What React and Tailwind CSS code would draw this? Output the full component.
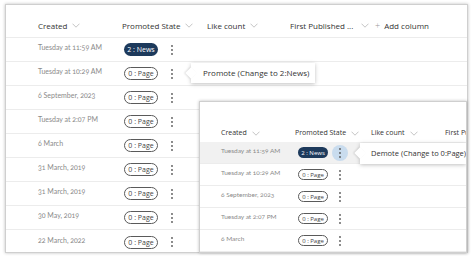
import React from "react";

const outerRows = [
  ["Tuesday at 11:59 AM", true],
  ["Tuesday at 10:29 AM", false],
  ["6 September, 2023", false],
  ["Tuesday at 2:07 PM", false],
  ["6 March", false],
  ["31 March, 2019", false],
  ["31 March, 2019", false],
  ["30 May, 2019", false],
  ["22 March, 2022", false],
];

const innerRows = [
  ["Tuesday at 11:59 AM", true],
  ["Tuesday at 10:29 AM", false],
  ["6 September, 2023", false],
  ["Tuesday at 2:07 PM", false],
  ["6 March", false],
];

function Chevron() {
  return (
    <svg width="8" height="5" viewBox="0 0 8 5">
      <path d="M0.5 0.7 L4 4.2 L7.5 0.7" fill="none" stroke="#b5b5b5" strokeWidth="0.8" />
    </svg>
  );
}

function Kebab() {
  return (
    <svg width="4" height="12" viewBox="0 0 4 12">
      <circle cx="2" cy="2" r="0.9" fill="#555" />
      <circle cx="2" cy="6" r="0.9" fill="#555" />
      <circle cx="2" cy="10" r="0.9" fill="#555" />
    </svg>
  );
}

function Pill({ news, small }) {
  const size = small ? "w-[30px] h-[11px] text-[6px]" : "w-[34px] h-[13px] text-[7px]";
  return news ? (
    <span className={`${size} rounded-full bg-[#1d3a5c] text-white flex items-center justify-center leading-none`}>
      2 : News
    </span>
  ) : (
    <span className={`${size} rounded-full border border-[#5a5a5a] text-[#444] bg-white flex items-center justify-center leading-none`}>
      0 : Page
    </span>
  );
}

function Head({ children, small }) {
  return (
    <div className={`flex items-center gap-[5px] text-[#333] whitespace-nowrap ${small ? "text-[7px]" : "text-[8px]"}`}>
      <span>{children}</span>
      <Chevron />
    </div>
  );
}

export default function App() {
  return (
    <div
      className="relative w-[474px] h-[260px] bg-white pt-[4px] pl-[5px] overflow-hidden"
      style={{ fontFamily: "'Open Sans', 'Noto Sans', sans-serif" }}
    >
      {/* Outer panel */}
      <div className="w-[463px] h-[249px] border border-[#cfcfcf] shadow-[0_0_3px_rgba(0,0,0,0.25)] bg-white">
        <div className="h-[33px] pt-[9px] pl-[32px] grid grid-cols-[84px_85px_83px_85px_auto] items-center border-b border-[#ececec]">
          <Head>Created</Head>
          <Head>Promoted State</Head>
          <Head>Like count</Head>
          <div className="flex items-center gap-[8px] text-[8px] text-[#333] whitespace-nowrap">
            <span>First Published ...</span>
            <Chevron />
          </div>
          <div className="flex items-center gap-[4px] text-[8px] text-[#333]">
            <span className="text-[#999] text-[9px] font-light">+</span>
            <span>Add column</span>
          </div>
        </div>
        {outerRows.map(([d, news], i) => (
          <div
            key={i}
            className="h-[24px] pl-[32px] grid grid-cols-[84px_auto] items-center border-b border-[#ececec] last:border-b-0"
          >
            <span
              className="text-[7px] text-[#8a8a8a] oldstyle-nums mb-[4px]"
              style={{ fontFamily: "Lato, 'Noto Sans', sans-serif" }}
            >
              {d}
            </span>
            <div className="flex items-center pl-[2px]">
              <Pill news={news} />
              <span className="ml-[12px]">
                <Kebab />
              </span>
            </div>
          </div>
        ))}
      </div>

      {/* Promote tooltip */}
      <div className="absolute left-[191px] top-[63px] w-[124px] h-[20px] bg-white shadow-[0_1px_4px_rgba(0,0,0,0.25)] flex items-center pl-[12px] text-[8px] text-[#333] whitespace-nowrap">
        <span className="absolute left-[-4px] top-[6px] w-[8px] h-[8px] bg-white rotate-45 shadow-[-1px_1px_2px_rgba(0,0,0,0.12)]" />
        <span className="relative">Promote (Change to 2:News)</span>
      </div>

      {/* Inner panel */}
      <div className="absolute left-[199px] top-[101px] w-[268px] h-[152px] bg-white border border-[#cfcfcf] shadow-[0_0_3px_rgba(0,0,0,0.25)] overflow-hidden">
        <div className="h-[40px] pt-[22px] pl-[21px] grid grid-cols-[74px_76px_74px_auto] items-center">
          <Head small>Created</Head>
          <Head small>Promoted State</Head>
          <Head small>Like count</Head>
          <div className="text-[7px] text-[#333] whitespace-nowrap">First Published</div>
        </div>
        {innerRows.map(([d, news], i) => (
          <div
            key={i}
            className={`h-[22px] pl-[21px] grid grid-cols-[74px_auto] items-center border-b border-[#ececec] last:border-b-0 ${
              i === 0 ? "bg-[#f1f1f1]" : ""
            }`}
          >
            <span
              className="text-[6.5px] text-[#8a8a8a] oldstyle-nums mb-[3px]"
              style={{ fontFamily: "Lato, 'Noto Sans', sans-serif" }}
            >
              {d}
            </span>
            <div className="flex items-center pl-[3px]">
              <Pill news={news} small />
              {i === 0 ? (
                <span className="ml-[4px] w-[16px] h-[16px] rounded-full bg-[#c9dcee] flex items-center justify-center">
                  <Kebab />
                </span>
              ) : (
                <span className="ml-[10px]">
                  <Kebab />
                </span>
              )}
            </div>
          </div>
        ))}

        {/* Demote tooltip */}
        <div className="absolute left-[160px] top-[41px] w-[106px] h-[21px] bg-white shadow-[0_1px_4px_rgba(0,0,0,0.25)] flex items-center pl-[11px] text-[7.5px] text-[#333] whitespace-nowrap">
          <span className="absolute left-[-4px] top-[6px] w-[8px] h-[8px] bg-white rotate-45 shadow-[-1px_1px_2px_rgba(0,0,0,0.12)]" />
          <span className="relative">Demote (Change to 0:Page)</span>
        </div>
      </div>
    </div>
  );
}
